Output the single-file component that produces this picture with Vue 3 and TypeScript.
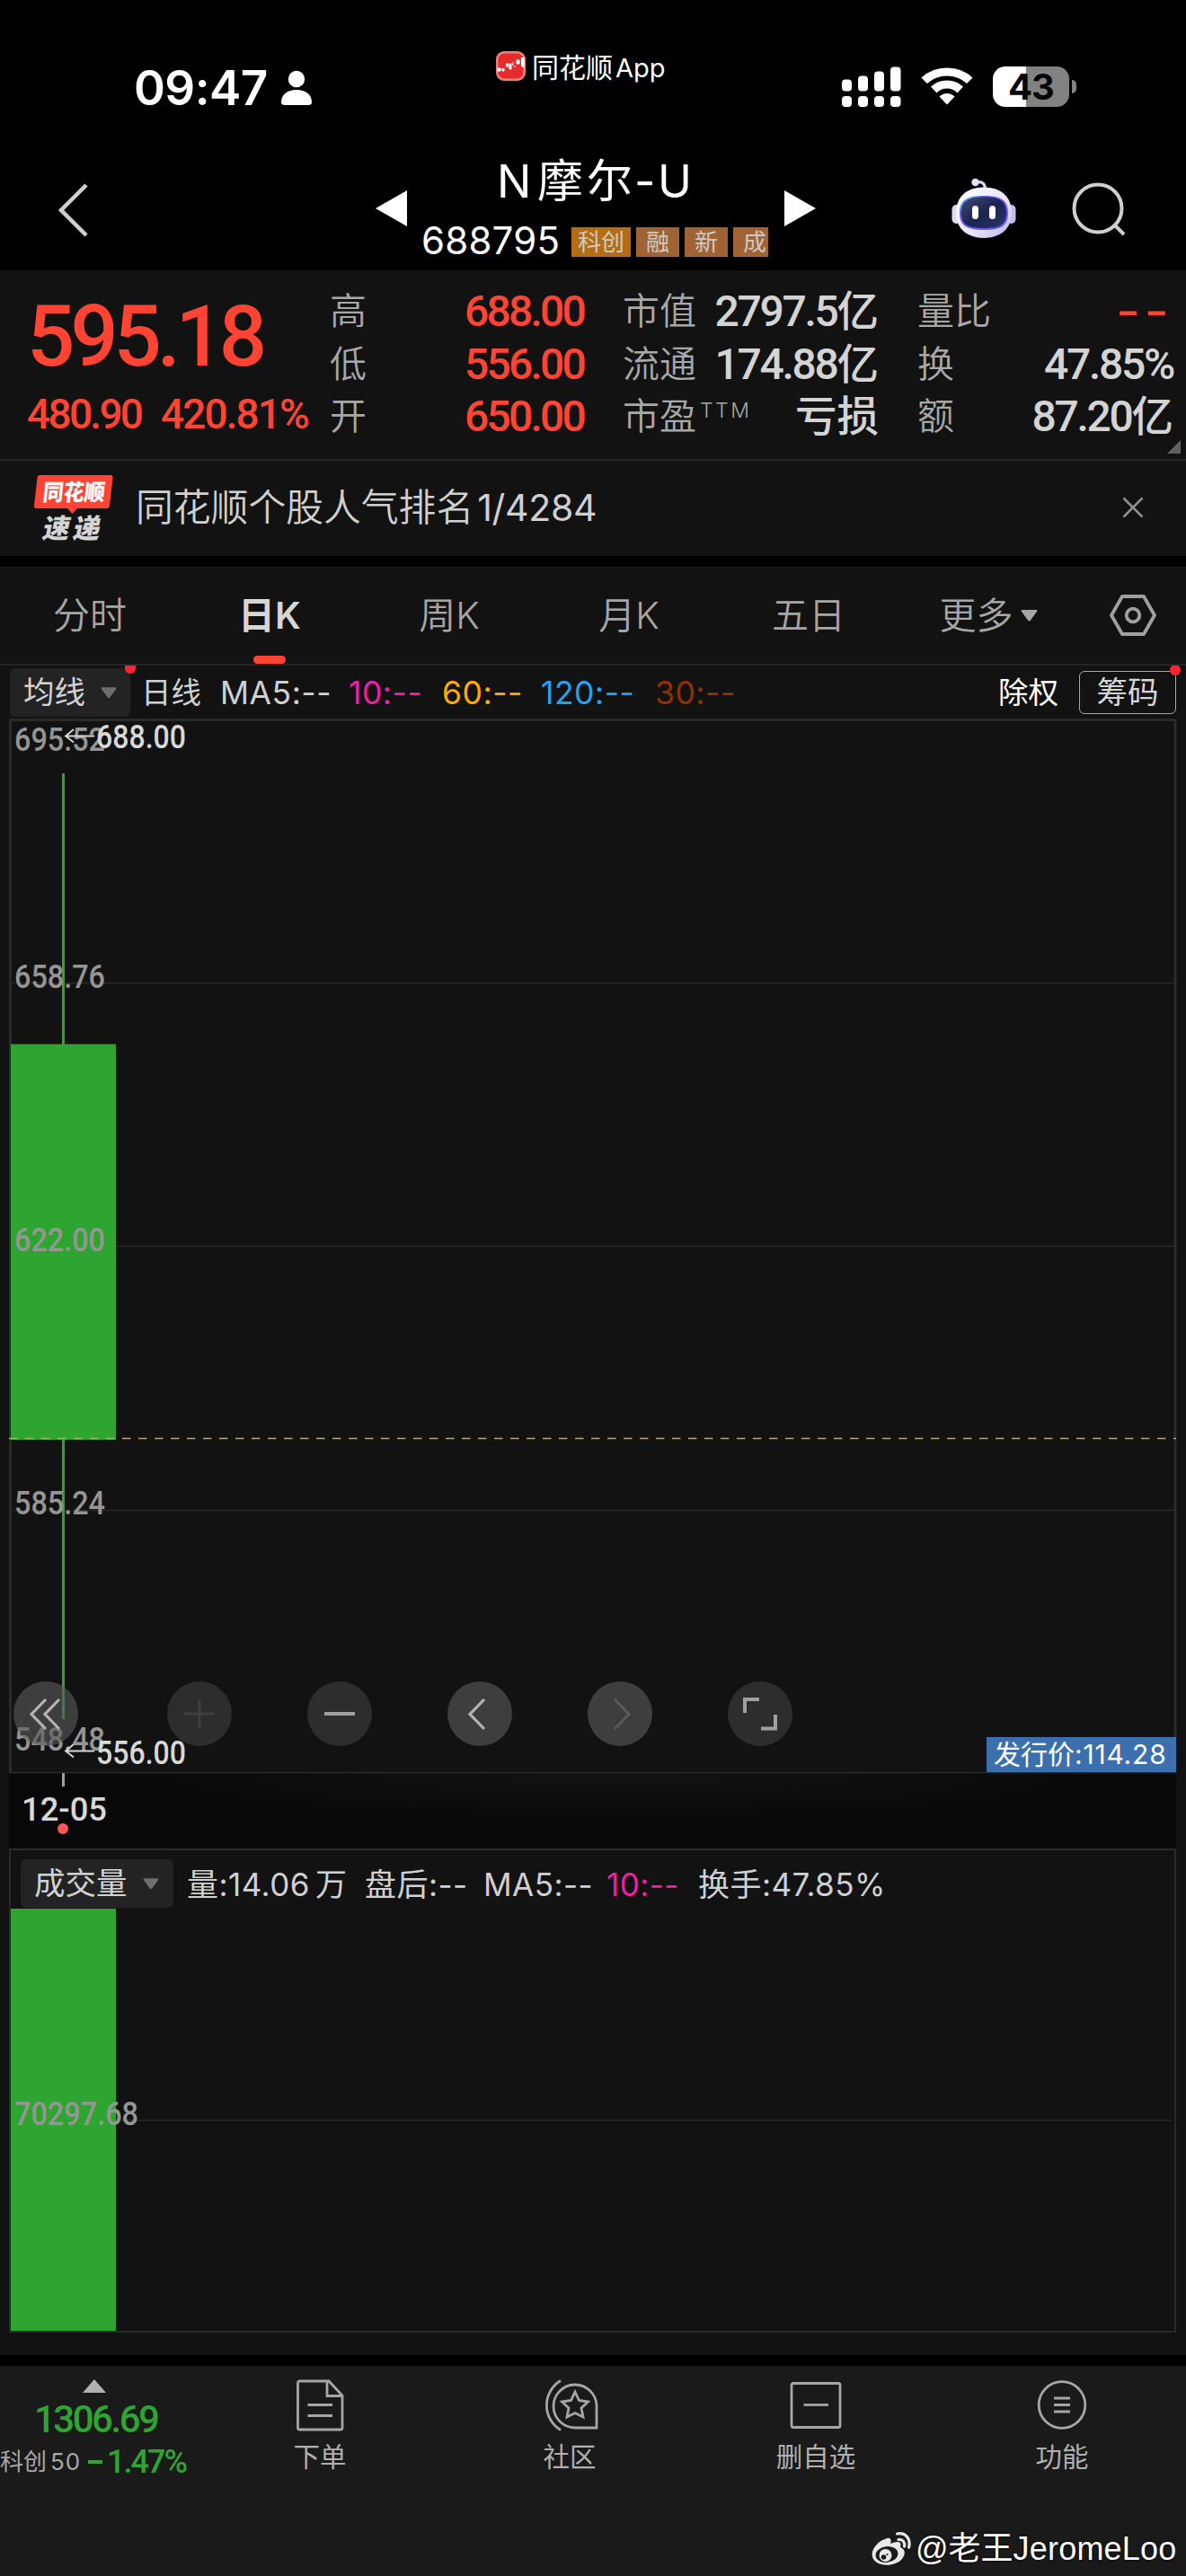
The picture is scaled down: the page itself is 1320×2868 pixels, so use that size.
<script setup lang="ts">
interface Metric { label: string; value: string }

const highLow: Metric[] = [
  { label: '高', value: '688.00' },
  { label: '低', value: '556.00' },
  { label: '开', value: '650.00' },
]
const market: { label: string; sup?: string; num: string; unit: string }[] = [
  { label: '市值', num: '2797.5', unit: '亿' },
  { label: '流通', num: '174.88', unit: '亿' },
  { label: '市盈', sup: 'TTM', num: '', unit: '亏损' },
]
const turnover: { label: string; num: string; unit: string; red?: boolean }[] = [
  { label: '量比', num: '--', unit: '', red: true },
  { label: '换', num: '47.85%', unit: '' },
  { label: '额', num: '87.20', unit: '亿' },
]
const tags = [
  { text: '科创', cls: 'gold' },
  { text: '融', cls: '' },
  { text: '新', cls: '' },
  { text: '成', cls: 'cut' },
]
const tabs = ['分时', '日K', '周K', '月K', '五日']
const averages = [
  { text: 'MA5:--', cls: 'c-base' },
  { text: '10:--', cls: 'c-pink' },
  { text: '60:--', cls: 'c-amber' },
  { text: '120:--', cls: 'c-blue' },
  { text: '30:--', cls: 'c-brown' },
]
const axis = [
  { text: '695.52', y: 36 },
  { text: '658.76', y: 300 },
  { text: '622.00', y: 593 },
  { text: '585.24', y: 886 },
  { text: '548.48', y: 1149 },
]
const gridLines = [294.5, 587.5, 881.5]
</script>

<template>
  <div class="screen">
    <header class="top">
      <div class="status">
        <span class="clock">09:47</span>
        <svg class="person" viewBox="0 0 36 40" width="36" height="40">
          <circle cx="18" cy="10" r="9.2" fill="#fff" />
          <path d="M1 36C1 27 8 22 18 22S35 27 35 36Q35 39 31 39H5Q1 39 1 36Z" fill="#fff" />
        </svg>
        <div class="island">
          <svg viewBox="0 0 33 33" width="33" height="33">
            <rect width="33" height="33" rx="9" fill="#f0807f" />
            <rect x="2.5" y="2.5" width="28" height="28" rx="7" fill="#e62b2c" />
            <path d="M2 22V19H5V22ZM7 19V22H9V19M11 14H14V17H11M15 14H17V20H15ZM19 16V12M20 17H22M23 10H26V14H23ZM28.500 7V15Q28.500 18 31 18V7" fill="#fff" stroke="#fff" stroke-width="1" />
          </svg>
          <span>同花顺<i>App</i></span>
        </div>
        <div class="radio">
          <svg viewBox="0 0 66 46" width="66" height="46" fill="#fff">
            <rect x="0" y="14.500" width="11" height="13" rx="4" />
            <rect x="18" y="10.500" width="11" height="17" rx="4" />
            <rect x="36" y="5.500" width="11" height="22" rx="4" />
            <rect x="54" y="0.500" width="11.500" height="27" rx="4" />
            <rect x="0" y="33" width="11" height="12" rx="4" />
            <rect x="18" y="33" width="11" height="12" rx="4" />
            <rect x="36" y="33" width="11" height="12" rx="4" />
            <rect x="54" y="33" width="11.500" height="12" rx="4" />
          </svg>
          <svg class="wifi" viewBox="0 0 58 42" width="58" height="42" fill="#fff">
            <path d="M29 41.500L20.500 32.500Q24 29 29 29T37.500 32.500Z" />
            <path d="M17.500 28.500L11 21.500Q18.500 14.500 29 14.500T47 21.500L40.500 28.500Q36 23.500 29 23.500T17.500 28.500Z" />
            <path d="M7 18L0.500 11.500Q12 0.500 29 0.500T57.500 11.500L51 18Q42 9.500 29 9.500T7 18Z" />
          </svg>
          <div class="battery"><span>43</span></div>
          <div class="nub"></div>
        </div>
      </div>

      <div class="nav">
        <svg class="back" viewBox="0 0 34 60" width="34" height="60">
          <path d="M31 2L3 30L31 58" fill="none" stroke="#cfcfcf" stroke-width="4.500" />
        </svg>
        <svg class="prev" viewBox="0 0 35 40" width="35" height="40"><path d="M0 20L35 0V40Z" fill="#fff" /></svg>
        <div class="stock">
          <div class="name"><span>N</span><span>摩</span><span>尔</span><span>-</span><span>U</span></div>
          <div class="code">
            <b>688795</b>
            <em v-for="t in tags" :key="t.text" :class="t.cls">{{ t.text }}</em>
          </div>
        </div>
        <svg class="next" viewBox="0 0 35 40" width="35" height="40"><path d="M35 20L0 0V40Z" fill="#fff" /></svg>
        <svg class="robot" viewBox="0 0 72 68" width="72" height="68">
          <defs>
            <linearGradient id="shell" x1="0" y1="0" x2="1" y2="1">
              <stop offset="0" stop-color="#fff" /><stop offset=".6" stop-color="#e6e4fa" /><stop offset="1" stop-color="#b9b4e4" />
            </linearGradient>
            <linearGradient id="visor" x1="0" y1="0" x2="1" y2="1">
              <stop offset="0" stop-color="#35cfe8" /><stop offset=".3" stop-color="#6a4fe0" /><stop offset=".65" stop-color="#7a5bff" /><stop offset="1" stop-color="#4a4be8" />
            </linearGradient>
            <linearGradient id="glass" x1="0" y1="0" x2="1" y2="1">
              <stop offset="0" stop-color="#414c74" /><stop offset=".5" stop-color="#1b2450" /><stop offset="1" stop-color="#283465" />
            </linearGradient>
          </defs>
          <path d="M27 5Q37 3 37.500 12" fill="none" stroke="#dcd9f5" stroke-width="3.200" />
          <circle cx="26.500" cy="5" r="4.200" fill="#e4e1fa" />
          <rect x="0.500" y="30" width="10" height="21" rx="5" fill="#dedbf6" />
          <rect x="61.500" y="30" width="10" height="21" rx="5" fill="#c3bee9" />
          <path d="M36 10.500C56 10.500 67 22 67 39S55 67 36 67S5 56 5 39S16 10.500 36 10.500Z" fill="url(#shell)" />
          <path d="M36 20C54 20 63 24 63 39S54 58 36 58S9 54 9 39S18 20 36 20Z" fill="url(#visor)" />
          <path d="M36 21.500C53 21.500 61 25.500 61 39S53 56 36 56S11 52.500 11 39S19 21.500 36 21.500Z" fill="url(#glass)" />
          <rect x="23" y="31" width="7" height="15" rx="3.500" fill="#fff" />
          <rect x="42" y="31" width="7" height="15" rx="3.500" fill="#fff" />
        </svg>
        <svg class="search" viewBox="0 0 62 62" width="62" height="62">
          <circle cx="30" cy="30" r="26.500" fill="none" stroke="#cfcfcf" stroke-width="4" />
          <path d="M49 49L59 59" stroke="#cfcfcf" stroke-width="4" />
        </svg>
      </div>
    </header>

    <section class="quote">
      <div class="price">
        <div class="last">595.18</div>
        <div class="delta"><span>480.90</span><span>420.81%</span></div>
      </div>
      <div class="col c1">
        <div v-for="m in highLow" :key="m.label" class="metric">
          <label>{{ m.label }}</label><span class="num red">{{ m.value }}</span>
        </div>
      </div>
      <div class="col c2">
        <div v-for="m in market" :key="m.label" class="metric">
          <label>{{ m.label }}<sup v-if="m.sup">{{ m.sup }}</sup></label>
          <span class="num">{{ m.num }}<b>{{ m.unit }}</b></span>
        </div>
      </div>
      <div class="col c3">
        <div v-for="m in turnover" :key="m.label" class="metric">
          <label>{{ m.label }}</label>
          <span class="num" :class="{ red: m.red, dashes: m.red }">{{ m.num }}<b v-if="m.unit">{{ m.unit }}</b></span>
        </div>
      </div>
      <i class="corner"></i>
    </section>

    <section class="news">
      <svg class="logo" viewBox="0 0 90 80" width="90" height="80">
        <path d="M7 1H86Q89 1 88.500 4L85 35Q84.500 38 81.500 38H49L43.500 44L38 38H4Q0.500 38 1 35L4.500 4Q5 1 7 1Z" fill="#ff4433" />
        <text x="10" y="29" class="lg" font-size="25" textLength="69" lengthAdjust="spacingAndGlyphs" transform="skewX(-6) translate(3 0)" fill="#fff">同花顺</text>
        <text x="10" y="71" class="lg" font-size="30" textLength="64" lengthAdjust="spacing" transform="skewX(-12) translate(14 0)" fill="#d4d4d4">速递</text>
      </svg>
      <p>同花顺个股人气排名<span>1/4284</span></p>
      <svg class="close" viewBox="0 0 24 24" width="24" height="24"><path d="M1.500 1.500L22.500 22.500M22.500 1.500L1.500 22.500" stroke="#909090" stroke-width="2.600" /></svg>
    </section>

    <nav class="tabs">
      <div v-for="t in tabs" :key="t" class="tab" :class="{ on: t === '日K' }">{{ t }}</div>
      <div class="tab more">更多<svg viewBox="0 0 19 13" width="19" height="13"><path d="M1.500 0H17.500Q19 0 18 2L11 11.500Q9.500 13.500 8 11.500L1 2Q0 0 1.500 0Z" fill="#a6a6a6" /></svg></div>
      <svg class="hex" viewBox="0 0 52 48" width="52" height="48" fill="none" stroke="#a0a0a0" stroke-width="3.800">
        <path d="M14 3H38L50 24L38 45H14L2 24Z" stroke-linejoin="round" />
        <circle cx="26" cy="24" r="7.300" />
      </svg>
    </nav>

    <main class="board">
      <div class="indicators">
        <div class="chip">均线<svg viewBox="0 0 19 13" width="18" height="13"><path d="M1.500 0H17.500Q19 0 18 2L11 11.500Q9.500 13.500 8 11.500L1 2Q0 0 1.500 0Z" fill="#6e6e6e" /></svg><i class="dot half"></i></div>
        <span class="cn">日线</span>
        <span v-for="a in averages" :key="a.text" class="avg" :class="a.cls">{{ a.text }}</span>
        <span class="cn white">除权</span>
        <span class="chips-btn">筹码<i class="dot"></i></span>
      </div>

      <div class="kline">
        <svg viewBox="0 0 1320 1174" width="1320" height="1174">
          <g stroke="#2a2a2a" stroke-width="2" fill="none">
            <path d="M10 1.500H1309" stroke-width="3" />
            <path d="M11.500 0V1174" stroke-width="3" />
            <path d="M1308 0V1174" stroke-width="3" />
            <path d="M10 1173.500H1309" stroke-width="1.500" />
            <path v-for="y in gridLines" :key="y" :d="`M12 ${y}H1307`" stroke="#282828" stroke-width="1.500" />
          </g>
          <rect x="69" y="61" width="3" height="1053" fill="#2fa531" />
          <rect x="12" y="362.500" width="117" height="440.500" fill="#2fa531" />
          <path d="M10 801.500H1309" stroke="#c3a268" stroke-width="1.300" stroke-dasharray="9.500 8.500" />
          <text v-for="a in axis" :key="a.text" x="16" :y="a.y" class="axis" textLength="101" lengthAdjust="spacingAndGlyphs">{{ a.text }}</text>
          <g stroke="#d8d8d8" stroke-width="1.800" fill="none">
            <path d="M105 19.500H73M82 12L73 19.500L82 26.500" />
            <path d="M105 1149.500H73M82 1142L73 1149.500L82 1156.500" />
          </g>
          <text x="107" y="33" class="mark" textLength="100" lengthAdjust="spacingAndGlyphs">688.00</text>
          <text x="107" y="1164" class="mark" textLength="100" lengthAdjust="spacingAndGlyphs">556.00</text>
        </svg>
        <div class="tools">
          <button class="lit"><svg viewBox="0 0 72 72"><path d="M36 20L20 36.500L36 53M51 20L35 36.500L51 53" /></svg></button>
          <button><svg class="off" viewBox="0 0 72 72"><path d="M19 36H53M36 20V52" /></svg></button>
          <button><svg class="bold" viewBox="0 0 72 72"><path d="M19 36H53" /></svg></button>
          <button class="lit"><svg viewBox="0 0 72 72"><path d="M41 20L25 36.500L41 53" /></svg></button>
          <button class="lit"><svg class="dim" viewBox="0 0 72 72"><path d="M30 20L46 36.500L30 53" /></svg></button>
          <button><svg class="bold" viewBox="0 0 72 72"><path d="M19 35V20H35M53 37V52.500H37" /></svg></button>
        </div>
        <div class="issue">发行价<span>:114.28</span></div>
      </div>

      <div class="dates">
        <i class="tick"></i>
        <svg viewBox="0 0 110 42" width="110" height="42"><text x="2" y="30" class="mark" textLength="95" lengthAdjust="spacingAndGlyphs">12-05</text></svg>
        <i class="red-dot"></i>
      </div>

      <div class="volume">
        <div class="vol-head">
          <div class="chip wide">成交量<svg viewBox="0 0 19 13" width="18" height="13"><path d="M1.500 0H17.500Q19 0 18 2L11 11.500Q9.500 13.500 8 11.500L1 2Q0 0 1.500 0Z" fill="#6e6e6e" /></svg></div>
          <span>量:14.06<u></u>万</span>
          <span>盘后:--</span>
          <span>MA5:--</span>
          <span class="c-pink">10:--</span>
          <span>换手:47.85%</span>
        </div>
        <svg viewBox="0 0 1294 470" width="1294" height="470">
          <path d="M0 235.500H1294" stroke="#282828" stroke-width="1.500" />
          <rect x="0" y="0" width="117" height="470" fill="#2fa531" />
          <text x="4" y="241" class="axis" textLength="138" lengthAdjust="spacingAndGlyphs">70297.68</text>
        </svg>
      </div>
    </main>

    <footer class="bottom">
      <div class="index">
        <svg viewBox="0 0 26 15" width="26" height="15"><path d="M13 0L26 15H0Z" fill="#b0b0b0" /></svg>
        <div class="pts">1306.69</div>
        <div class="line"><label>科创<span>50</span></label><b><s></s>1.47%</b></div>
      </div>
      <div class="act a1">
        <svg viewBox="0 0 60 60" width="60" height="60"><path d="M38 3H7.500Q5.500 3 5.500 5V55Q5.500 57 7.500 57H53Q55 57 55 55V19L40 3H38V19.500H55M16.500 29.500H44M16.500 41.500H44" /></svg>
        <span>下单</span>
      </div>
      <div class="act a2">
        <svg viewBox="0 0 60 60" width="60" height="60"><path d="M60 54.500V30A24 24 0 1 0 36 55H60ZM20 2.500A32 32 0 0 0 20 57.500" /><path d="M36 15L40.500 24.500L50.500 26L43 33L45 43L36 38.500L27 43L29 33L21.500 26L31.500 24.500Z" /></svg>
        <span>社区</span>
      </div>
      <div class="act a3">
        <svg viewBox="0 0 60 60" width="60" height="60"><rect x="3" y="5.500" width="54" height="49" rx="2" /><path d="M16.500 29.500H44" /></svg>
        <span>删自选</span>
      </div>
      <div class="act a4">
        <svg viewBox="0 0 60 60" width="60" height="60"><circle cx="30" cy="29.500" r="25.800" /><path d="M21 22H39M21 29.500H39M21 37H39" /></svg>
        <span>功能</span>
      </div>
      <div class="sign">
        <svg viewBox="0 0 44 38" width="44" height="38">
          <path d="M15 8C20 5 23 8 21 13C30 9 34 11 32 17C38 19 38 25 34 30C28 37 14 39 6 34C-2 29 0 20 5 15C8 11 11 9 15 8Z" fill="#e8e8e8" />
          <ellipse cx="17" cy="25" rx="12.500" ry="8.800" fill="#1a1a1a" transform="rotate(-8 17 25)" />
          <circle cx="15.500" cy="26" r="7" fill="#e8e8e8" />
          <circle cx="13.500" cy="28" r="2.800" fill="#1a1a1a" /><circle cx="17.500" cy="25" r="1.100" fill="#1a1a1a" />
          <path d="M28.500 2C38 0 44 8 41.500 17M30 8.500C35 8 37.500 12 36.500 16" fill="none" stroke="#e8e8e8" stroke-width="3.200" stroke-linecap="round" />
        </svg>
        <span class="handle">@老王<i>JeromeLoo</i></span>
      </div>
    </footer>
  </div>
</template>

<style>
body { margin: 0; background: #000; }
</style>

<style scoped>
.screen {
  width: 1320px;
  height: 2868px;
  overflow: hidden;
  background: #000;
  color: #d0d0d0;
  font-family: Inter, "Noto Sans CJK SC", sans-serif;
  display: flex;
  flex-direction: column;
}
svg { display: block; flex: none; overflow: visible; }
i, em { font-style: normal; }
span, label { white-space: nowrap; }

/* status bar and navigation */
.top { height: 301px; color: #fff; flex: none; }
.status { height: 170px; display: flex; align-items: flex-start; }
.clock { margin: 68px 0 0 149px; width: 163px; font-size: 53px; line-height: 60px; font-weight: 600; letter-spacing: -0.6px; }
.person { margin-top: 78px; }
.island { margin: 57px 0 0 204px; width: 300px; display: flex; gap: 7px; align-items: center; height: 33px; }
.island span { font-size: 30px; line-height: 38px; padding-top: 4px; }
.island i { margin-left: 3px; font-size: 29px; }
.radio { margin: 74px 0 0 85px; display: flex; }
.wifi { margin: 1px 0 0 22px; }
.battery { margin-left: 22px; width: 85px; height: 45px; border-radius: 14px; background: linear-gradient(90deg, #fff 37px, #828282 37px); color: #060606; font-size: 40px; line-height: 46px; font-weight: 700; text-align: center; letter-spacing: -1px; }
.nub { width: 5px; height: 15px; margin: 15px 0 0 3px; border-radius: 0 6px 6px 0; background: #828282; }
.nav { height: 131px; display: flex; align-items: flex-start; }
.back { margin: 34px 0 0 65px; }
.prev { margin: 42px 0 0 319px; }
.stock { width: 420px; }
.name { display: grid; grid-template-columns: 45px 55px 53px 26px 40px; margin-left: 100px; font-size: 51px; line-height: 64px; height: 73px; }
.code { display: flex; gap: 6px; margin: 4px 0 0 16px; line-height: 41px; }
.code b { font-weight: 400; font-size: 42px; width: 161px; letter-spacing: 0.2px; }
.code em { margin-top: 6px; height: 33px; line-height: 33px; width: 48px; background: #a16334; color: #cccbc8; font-size: 26px; text-align: center; overflow: hidden; }
.code em.gold { width: 66px; background: #b46d12; }
.code em.cut { width: 39px; text-indent: 11px; text-align: left; }
.next { margin-top: 42px; }
.robot { margin: 28px 0 0 151px; }
.search { margin: 32px 0 0 61px; }

/* quote */
.quote { position: relative; height: 210px; flex: none; background: #121212; border-bottom: 2px solid #262626; display: flex; }
.price { width: 367px; color: #ff4433; font-family: Roboto, sans-serif; font-weight: 500; }
.last { margin: 28px 0 0 30px; font-size: 94px; line-height: 92px; letter-spacing: -5.2px; }
.delta { display: flex; margin: 15px 0 0 30px; font-size: 46px; line-height: 50px; letter-spacing: -1.900px; }
.delta span:first-child { width: 149px; letter-spacing: -2.7px; }
.col { padding-top: 16px; }
.c1 { width: 283px; margin-right: 43px; }
.c2 { width: 285px; margin-right: 43px; }
.c3 { width: 285px; }
.metric { display: flex; justify-content: space-between; height: 58.700px; line-height: 59px; }
.metric label { color: #a8a8a8; font-size: 41px; display: flex; font-weight: 350; }
.metric sup { font-size: 23px; line-height: 46px; letter-spacing: 2.500px; margin-left: 4px; }
.num { font-family: Roboto, "Noto Sans CJK SC", sans-serif; font-size: 48px; font-weight: 500; letter-spacing: -2.3px; color: #d4d4d4; }
.c1 .num { letter-spacing: -2.8px; }
.num b { font-size: 46.5px; font-weight: 500; letter-spacing: 0; }
.num.red { color: #ff4433; }
.c3 .num.dashes { letter-spacing: 4.5px; transform: scaleX(1.52); transform-origin: right; margin-right: -1px; font-weight: 500; }
.corner { position: absolute; right: 6px; bottom: 6px; border-left: 15px solid transparent; border-bottom: 15px solid #606060; }

/* news strip */
.news { height: 106px; flex: none; background: #121212; display: flex; }
.logo { margin: 15px 0 0 37px; }
.lg { font-family: "Noto Sans CJK SC", sans-serif; font-weight: 900; }
.news p { margin: 0 0 0 24px; width: 1098px; font-size: 41.800px; line-height: 104px; white-space: nowrap; font-weight: 350; }
.news p span { margin-left: 4px; font-weight: 400; letter-spacing: -0.300px; font-size: 41px; }
.close { margin-top: 40px; }

/* period tabs */
.tabs { height: 108px; margin-top: 12px; flex: none; background: #121212; border-bottom: 2px solid #262626; display: flex; position: relative; }
.tab { width: 200px; text-align: center; line-height: 109px; font-size: 41px; color: #a6a6a6; font-weight: 350; height: 108px; }
.tab.on { position: relative; color: #d6d6d6; font-weight: 600; }
.tab.on::after { content: ""; position: absolute; left: 82px; bottom: 0; width: 36px; height: 9px; border-radius: 4.500px; background: #ff4433; }
.tab.more { display: flex; justify-content: center; align-items: center; gap: 8px; }
.hex { margin: 30px 0 0 35px; }

/* chart board */
.board { height: 1881px; flex: none; background: #121212; }
.indicators { height: 59px; display: grid; grid-template-columns: 134px 88px 143px 104px 110px 127px 380px 104px 108px; grid-template-rows: 54px; padding: 3px 0 0 11px; box-sizing: border-box; font-size: 35.5px; line-height: 55px; overflow: hidden; }
.chip { position: relative; box-sizing: border-box; height: 54px; border-radius: 6px; background: #232323; display: flex; align-items: center; gap: 17px; padding-left: 15px; font-size: 34.500px; line-height: 54px; color: #d2d2d2; }
.cn { font-size: 33.5px; padding-left: 12px; }
.cn.white { padding-left: 14px; color: #fff; }
.indicators .avg { padding-left: 12px; letter-spacing: 0.5px; }
.c-base { color: #d0d0d0; }
.c-pink { color: #f01fa3; }
.c-amber { color: #ffab00; }
.c-blue { color: #22a2f0; }
.c-brown { color: #933000; }
.chips-btn { position: relative; box-sizing: border-box; height: 48px; margin-top: 3px; border: 1.500px solid #a8a8a8; border-radius: 6px; text-align: center; line-height: 45px; font-size: 34.500px; color: #d6d6d6; }
.dot { position: absolute; right: -6px; top: -8px; width: 12px; height: 12px; border-radius: 50%; background: #ff2233; }
.dot.half { right: -6px; top: -3px; height: 9px; border-radius: 0 0 6px 6px; }
.kline { position: relative; height: 1174px; }
.axis { font: 500 36px Roboto, sans-serif; fill: #959595; }
.mark { font: 500 36px Roboto, sans-serif; fill: #d8d8d8; }
.tools { position: absolute; left: 15px; top: 1072px; display: flex; gap: 84px; }
.tools button { width: 72px; height: 72px; border: 0; padding: 0; border-radius: 50%; background: #2d2d2d; }
.tools button.lit { background: rgba(90, 90, 90, .62); }
.tools button:first-child { margin-right: 15px; }
.tools path { fill: none; stroke: #b4b4b4; stroke-width: 3.200; }
.tools .off path { stroke: #3f3f3f; }
.tools .dim path { stroke: #5a5a5a; }
.tools .bold path { stroke: #a0a0a0; stroke-width: 4; }
.issue { position: absolute; left: 1098px; top: 1134px; width: 211px; height: 39px; box-sizing: border-box; padding-left: 8px; background: #3b6fae; color: #fff; font-size: 30px; line-height: 39px; white-space: nowrap; }
.issue span { font-size: 30px; letter-spacing: 0.8px; }
.dates { height: 84px; margin: 0 11px 0 10px; background: radial-gradient(ellipse 50% 70% at 52% 0, #131313, #080808); display: flex; flex-direction: column; align-items: flex-start; }
.tick { flex: none; width: 2.500px; height: 15px; margin-left: 59px; background: #a0a0a0; }
.dates svg { margin: 8px 0 0 12px; }
.red-dot { flex: none; width: 12px; height: 12px; margin: -9px 0 0 54px; border-radius: 50%; background: #ff5757; }
.volume { margin: 0 11px 0 10px; height: 539px; box-sizing: border-box; border: 2.500px solid #2a2a2a; }
.vol-head { height: 65px; display: grid; grid-template-columns: 170px 198px 132px 137px 102px 300px; padding: 10px 0 0 11px; box-sizing: border-box; font-size: 35px; line-height: 56px; letter-spacing: 0.450px; }
.vol-head > span { padding-left: 15px; }
.vol-head u { display: inline-block; width: 6px; }
.chip.wide { letter-spacing: 0; }

/* bottom bar */
.bottom { position: relative; margin-top: 12px; height: 234px; flex: none; background: #1a1a1a; display: flex; }
.index { width: 240px; }
.index > svg { margin: 15px 0 0 92px; }
.pts { margin: 6px 0 0 38px; font: 500 42px/48px Roboto, sans-serif; letter-spacing: -2.5px; color: #2fa531; }
.line { display: flex; margin-top: 2px; line-height: 38px; }
.line label { width: 98px; font-size: 26px; line-height: 42px; color: #a8a8a8; }
.line label span { margin-left: 4px; letter-spacing: 1px; }
.line b { font: 500 36px/38px Roboto, sans-serif; letter-spacing: -2px; color: #2fa531; display: flex; align-items: center; }
.line s { width: 16px; height: 3.500px; margin-right: 5px; background: #2fa531; }
.act { display: flex; flex-direction: column; align-items: center; width: 120px; padding-top: 14px; }
.act span { margin-top: 5px; font-size: 29.500px; line-height: 44px; color: #b0b0b0; }
.act svg { fill: none; stroke: #a6a6a6; stroke-width: 2.800; }
.a1 { margin-left: 56px; }
.a2 { margin-left: 158px; }
.a3 { margin-left: 154px; }
.a4 { margin-left: 154px; }
.sign { position: absolute; left: 970px; top: 176px; display: flex; align-items: center; gap: 5px; color: #fff; text-shadow: 0 0 3px #000; }
.handle { font: 36px/56px "Liberation Sans", "Noto Sans CJK SC", sans-serif; }
.handle i { letter-spacing: 0.200px; }
</style>
